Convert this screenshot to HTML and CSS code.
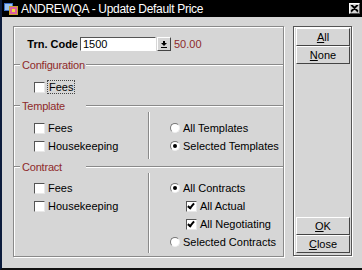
FILE: index.html
```html
<!DOCTYPE html>
<html>
<head>
    <title>ANDREWQA - Update Default Price</title>
    <link rel="stylesheet" href="styles.css">
</head>
<body>
    <div class="window">
        <div class="titlebar">
            <svg class="app-icon" width="14" height="13" viewBox="0 0 14 13">
                <rect x="0" y="1" width="9" height="8" fill="#3a6ec8"/>
                <rect x="1" y="2" width="7" height="6" fill="#9cc4f0"/>
                <rect x="5" y="4" width="9" height="9" fill="#c8a030"/>
                <rect x="6" y="5" width="7" height="7" fill="#e060a0"/>
                <rect x="8" y="7" width="3" height="3" fill="#f0e040"/>
            </svg>
            <span class="title">ANDREWQA - Update Default Price</span>
            <div class="close-btn">
                <svg width="9" height="8" viewBox="0 0 9 8">
                    <path d="M1 0 L8 7 M8 0 L1 7 M2 0 L8 6 M7 0 L1 6" stroke="#000" stroke-width="1.2" fill="none"/>
                </svg>
            </div>
        </div>

        <div class="content">
            <div class="main-panel">
                <div class="trn-row">
                    <label class="trn-label">Trn. Code</label>
                    <div class="combo-input">1500</div>
                    <div class="combo-btn">
                        <svg width="8" height="9" viewBox="0 0 8 9">
                            <path d="M1 3 H7 L4 6 Z" fill="#000"/>
                            <rect x="1" y="7" width="6" height="1" fill="#000"/>
                            <rect x="3" y="1" width="2" height="2" fill="#000"/>
                        </svg>
                    </div>
                    <span class="amount">50.00</span>
                </div>

                <div class="group-header group-config">
                    <span class="dash"></span>
                    <span class="group-title">Configuration</span>
                    <span class="line"></span>
                </div>
                <div class="group-body config-body">
                    <div class="col col-left">
                        <div class="opt"><span class="check"></span><span class="focused">Fees</span></div>
                    </div>
                </div>

                <div class="group-header">
                    <span class="dash"></span>
                    <span class="group-title">Template</span>
                    <span class="line"></span>
                </div>
                <div class="group-body template-body">
                    <div class="col col-left">
                        <div class="opt"><span class="check"></span>Fees</div>
                        <div class="opt"><span class="check"></span>Housekeeping</div>
                    </div>
                    <div class="divider"></div>
                    <div class="col col-right">
                        <div class="opt"><span class="radio"></span>All Templates</div>
                        <div class="opt"><span class="radio on"></span>Selected Templates</div>
                    </div>
                </div>

                <div class="group-header">
                    <span class="dash"></span>
                    <span class="group-title">Contract</span>
                    <span class="line"></span>
                </div>
                <div class="group-body contract-body">
                    <div class="col col-left">
                        <div class="opt"><span class="check"></span>Fees</div>
                        <div class="opt"><span class="check"></span>Housekeeping</div>
                    </div>
                    <div class="divider"></div>
                    <div class="col col-right">
                        <div class="opt"><span class="radio on"></span>All Contracts</div>
                        <div class="opt sub"><span class="check on"></span>All Actual</div>
                        <div class="opt sub"><span class="check on"></span>All Negotiating</div>
                        <div class="opt"><span class="radio"></span>Selected Contracts</div>
                    </div>
                </div>
            </div>

            <div class="side-panel">
                <div class="btn-group">
                    <div class="btn"><u>A</u>ll</div>
                    <div class="btn"><u>N</u>one</div>
                </div>
                <div class="btn-group">
                    <div class="btn"><u>O</u>K</div>
                    <div class="btn"><u>C</u>lose</div>
                </div>
            </div>
        </div>
    </div>
</body>
</html>
```

FILE: styles.css
```css
body {
    margin: 0;
    background-color: #d6d6d6;
    font-family: "Liberation Sans", Arial, sans-serif;
    font-size: 11px;
    color: #000;
}
.window {
    width: 362px;
    height: 270px;
    box-sizing: border-box;
    background-color: #d6d6d6;
    border-left: 2px solid #0c1c3c;
    border-bottom: 2px solid #111;
    display: flex;
    flex-direction: column;
}
.titlebar {
    height: 17px;
    background-color: #000;
    color: #fff;
    display: flex;
    align-items: center;
    padding-left: 2px;
    padding-right: 2px;
}
.app-icon {
    margin-right: 3px;
}
.title {
    flex: 1;
    font-size: 12px;
    letter-spacing: -0.3px;
}
.close-btn {
    width: 11px;
    height: 11px;
    box-sizing: border-box;
    background-color: #d6d6d6;
    border-top: 1px solid #fff;
    border-left: 1px solid #fff;
    border-right: 1px solid #555;
    border-bottom: 1px solid #555;
    display: flex;
    justify-content: center;
    align-items: center;
}
.content {
    flex: 1;
    display: flex;
    padding: 9px 0 0 11px;
    gap: 9px;
}
.main-panel {
    width: 271px;
    height: 231px;
    box-sizing: border-box;
    border: 1px solid #8a8a8a;
    box-shadow: inset 1px 1px 0 #fff, 1px 1px 0 #fff;
    padding-top: 10px;
}
.trn-row {
    display: flex;
    align-items: center;
    height: 14px;
}
.trn-label {
    width: 64px;
    text-align: right;
    font-weight: bold;
    margin-right: 2px;
}
.combo-input {
    width: 76px;
    height: 14px;
    box-sizing: border-box;
    background-color: #fff;
    border-top: 1px solid #555;
    border-left: 1px solid #555;
    border-right: 1px solid #fff;
    border-bottom: 1px solid #fff;
    padding-left: 2px;
    line-height: 12px;
}
.combo-btn {
    width: 14px;
    height: 14px;
    box-sizing: border-box;
    margin-left: 1px;
    border-top: 1px solid #fff;
    border-left: 1px solid #fff;
    border-right: 1px solid #444;
    border-bottom: 1px solid #444;
    display: flex;
    justify-content: center;
    align-items: center;
}
.amount {
    color: #8e2a2a;
    margin-left: 3px;
}
.group-header {
    display: flex;
    align-items: center;
    height: 12px;
}
.group-config {
    margin-top: 8px;
}
.dash,
.line {
    height: 1px;
    background-color: #8a8a8a;
    border-bottom: 1px solid #fff;
}
.dash {
    width: 6px;
    flex-shrink: 0;
}
.line {
    flex: 1;
}
.group-title {
    flex: 0 0 66px;
    padding-left: 2px;
    box-sizing: border-box;
    white-space: nowrap;
    letter-spacing: -0.2px;
    color: #8e2a2a;
}
.group-body {
    display: flex;
}
.config-body {
    padding-top: 7px;
    height: 22px;
}
.template-body {
    height: 49px;
}
.template-body .col {
    padding-top: 7px;
}
.contract-body {
    height: 82px;
}
.contract-body .col {
    padding-top: 6px;
}
.col-left {
    width: 134px;
    padding-left: 20px;
    box-sizing: border-box;
}
.col-right {
    padding-left: 20px;
}
.divider {
    width: 1px;
    margin-bottom: 2px;
    background-color: #8a8a8a;
    border-right: 1px solid #fff;
}
.opt {
    height: 18px;
    display: flex;
    align-items: center;
}
.opt.sub {
    padding-left: 16px;
}
.check {
    width: 11px;
    height: 11px;
    box-sizing: border-box;
    background-color: #fff;
    border-top: 1px solid #555;
    border-left: 1px solid #555;
    border-right: 1px solid #e8e8e8;
    border-bottom: 1px solid #e8e8e8;
    margin-right: 3px;
    position: relative;
}
.check.on::after {
    content: "";
    position: absolute;
    left: 2px;
    top: 0;
    width: 2px;
    height: 5px;
    border-right: 2px solid #000;
    border-bottom: 2px solid #000;
    transform: rotate(40deg);
}
.radio {
    width: 10px;
    height: 10px;
    box-sizing: border-box;
    border-radius: 50%;
    background-color: #fff;
    border: 1px solid #777;
    border-bottom-color: #eee;
    border-right-color: #eee;
    margin-right: 3px;
    position: relative;
}
.radio.on::after {
    content: "";
    position: absolute;
    left: 2px;
    top: 2px;
    width: 4px;
    height: 4px;
    border-radius: 50%;
    background-color: #000;
}
.focused {
    outline: 1px dotted #444;
    padding: 0 1px;
}
.side-panel {
    width: 59px;
    height: 230px;
    box-sizing: border-box;
    border: 1px solid #555;
    box-shadow: inset 1px 1px 0 #fff, 1px 1px 0 #fff;
    padding: 1px 1px 2px 2px;
    display: flex;
    flex-direction: column;
    justify-content: space-between;
}
.btn {
    height: 18px;
    box-sizing: border-box;
    border-top: 1px solid #fff;
    border-left: 1px solid #fff;
    border-right: 1px solid #444;
    border-bottom: 1px solid #444;
    display: flex;
    justify-content: center;
    align-items: center;
}
```
